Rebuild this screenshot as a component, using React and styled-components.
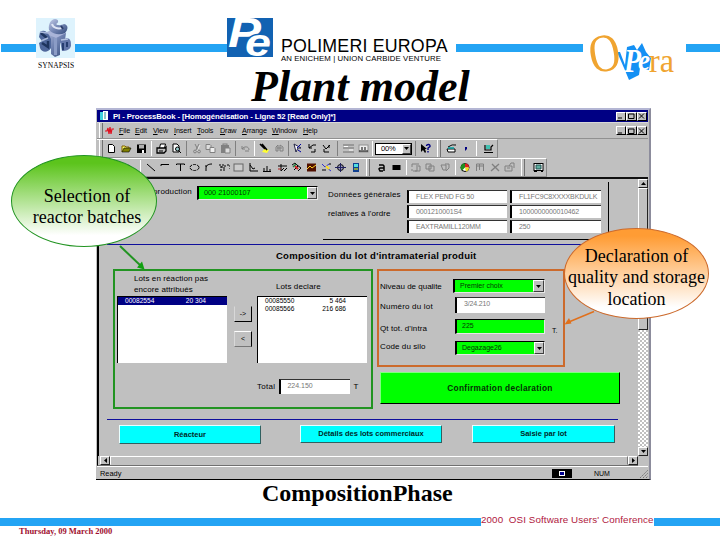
import React from "react";
import styled, { createGlobalStyle } from "styled-components";

const BLUE = "#24a4f4";
const GRAY = "#c0c0c0";
const LIME = "#00ff00";

const toolbarTop = [
  ["new", 14.5], ["open", 15], ["save", 15], ["sep", 5.5], ["print", 15],
  ["preview", 14.5], ["sepDark", 6], ["cut", 14], ["copy", 14], ["paste", 15],
  ["sepDark", 5.5], ["undo", 14], ["sep", 5], ["pen", 14.5], ["binoculars", 15],
  ["sepDark", 4], ["pointer", 14.5], ["rotateL", 14.5], ["rotateR", 14.5],
  ["sepDark", 7], ["rows", 15], ["columns", 14], ["sep", 4], ["zoom", 39],
  ["sepDark", 5], ["help", 15], ["grip", 11], ["build", 14], ["dot", 15],
  ["sep", 6], ["machine", 19],
];

const toolbarBottom = [
  ["blank", 14], ["magnifier", 18], ["sep", 8], ["line", 14.57],
  ["polyline", 14.57], ["text", 14.57], ["ellipse", 14.57], ["arc", 14.57],
  ["value", 14.57], ["button", 14.57], ["trend", 14.57], ["bars", 14.57],
  ["symbol", 14.57], ["multi", 14.57], ["chart", 14.57], ["xy", 14.57],
  ["target", 14.57], ["doc", 14.57], ["grip", 12], ["fontA", 14.5],
  ["fill", 14.5], ["sep", 6], ["group", 14.3], ["front", 14.3],
  ["back", 14.3], ["sep", 6], ["pie", 14.7], ["letterM", 14.7],
  ["cross", 14.7], ["card", 14.7], ["grip", 12], ["screen", 18],
];

const menus = [
  ["File", 16], ["Edit", 18], ["View", 21], ["Insert", 23], ["Tools", 23],
  ["Draw", 22], ["Arrange", 30], ["Window", 31], ["Help", 20],
];

const k = { fill: "none", stroke: "#000", strokeWidth: 1 };
const g = { fill: "none", stroke: "#808080", strokeWidth: 1 };

const shapes = {
  new: <path d="M2.5 1.5h4l2 2v6h-6z" fill="#fff" stroke="#000" />,
  open: (
    <>
      <path d="M1 9V3h3l1 1h3v2" fill="#ffff66" stroke="#806000" />
      <path d="M1 9l2-4h7L8 9z" fill="#808000" stroke="#000" strokeWidth=".6" />
    </>
  ),
  save: (
    <>
      <rect x="1" y="1.5" width="9" height="8.5" fill="#000" />
      <rect x="3" y="2" width="5" height="3.5" fill="#b0b0b0" />
      <rect x="6" y="7" width="2" height="3" fill="#fff" />
    </>
  ),
  print: (
    <>
      <path d="M3.5 5l1-4h5l-1 4" fill="#fff" stroke="#000" />
      <path d="M1 5h8l1-1v4l-2 2H1z" fill={GRAY} stroke="#000" strokeWidth="1.3" />
      <path d="M3 8h4" {...k} />
    </>
  ),
  preview: (
    <>
      <path d="M2 1h4l2 2v6H2z" fill="#fff" stroke="#000" />
      <circle cx="6.5" cy="6" r="2" fill="#9cc" stroke="#000" />
      <path d="M8 8l2 2" {...k} />
    </>
  ),
  cut: (
    <>
      <path d="M4 1l3 6M8 1L5 7" {...g} />
      <circle cx="4" cy="8.5" r="1.4" {...g} />
      <circle cx="8" cy="8.5" r="1.4" {...g} />
      <path d="M9 2L6 8" stroke="#fff" strokeWidth=".6" />
    </>
  ),
  copy: (
    <>
      <path d="M1 1.5h4l1 1v4H1z" fill="#ddd" stroke="#808080" />
      <path d="M5 4.5h4l1 1v4H5z" fill="#eee" stroke="#808080" />
    </>
  ),
  paste: (
    <>
      <rect x="1" y="2" width="8" height="8" fill="#808080" />
      <rect x="3" y="1" width="4" height="2" {...g} />
      <path d="M5 5h5v5H5z" fill="#ddd" stroke="#808080" />
    </>
  ),
  undo: <path d="M2 3v3h3M2 6c2-3 7-3 7 1M5 8h4" {...g} />,
  pen: (
    <>
      <path d="M6 5l4 2-2 3-5-1z" fill="#ffff33" />
      <path d="M1 1l5 5M3 1l5 6" stroke="#000" strokeWidth="1.6" />
    </>
  ),
  binoculars: (
    <>
      <path d="M2 8V4l2-2v6zM6 8V2l3 2v4z" {...g} />
      <path d="M3 5h5" {...g} />
    </>
  ),
  pointer: (
    <>
      <path d="M2 1l2 8 2-4 3 0z" fill="#fff" stroke="#224" />
      <path d="M5 5l4-4M6 7l3 2" stroke="#0000a0" />
    </>
  ),
  rotateL: <path d="M2 1v4h3M2 5l4-3h3M4 9h4V6" {...k} />,
  rotateR: <path d="M2 2l3 4 4-4M3 6v3h5M8 2v3" {...k} />,
  rows: (
    <>
      <path d="M0 2h11M0 5h11M0 9h11" stroke="#707070" />
      <path d="M1 3.5h4M6 7h4" stroke="#fff" />
    </>
  ),
  columns: (
    <>
      <rect x="1" y="2" width="9" height="7" fill="#eee" stroke="#909090" />
      <path d="M1 8h9M4 4v3M7 4v3" {...k} />
    </>
  ),
  help: (
    <>
      <path d="M1 1v8l2-2 2 3 1-1-1-3h2z" fill="#000" />
      <path d="M6.5 3c0-2 4-2 3.500.5L8 5v2M8 8v1.500" stroke="#000080" strokeWidth="1.400" fill="none" />
    </>
  ),
  build: (
    <>
      <path d="M1 6h8v3H2zM2 4l4-2h4" fill="#fff" stroke="#000" />
      <path d="M2 5h6" stroke="#00a0a0" strokeWidth="1.500" />
    </>
  ),
  dot: <path d="M5 4h2v2L5 8z" fill="#000080" />,
  machine: (
    <>
      <path d="M1 9.5h9M2 2v5h6V4l2-2" stroke="#000" fill="none" strokeWidth="1.2" />
      <rect x="3" y="2" width="4" height="4" fill="#40c0b0" />
    </>
  ),
  magnifier: <path d="M2 9l2-4 3-2 2 2v5M5 6l2 3" {...k} />,
  line: <path d="M1 2l8 7" {...k} />,
  polyline: <path d="M1 4V2.500h8" {...k} />,
  text: <path d="M1.500 3V2h8v1M5.500 2v7" {...k} />,
  ellipse: <ellipse cx="5.500" cy="5.500" rx="4.500" ry="3" strokeDasharray="3 1" {...k} />,
  arc: <path d="M2 9V6c0-3 3-4 6-4M1 4h2" {...k} />,
  value: <path d="M0 3h2v4M3 3h3v3H3zM8 3h3v4M1 8h6" strokeDasharray="2 1" {...k} />,
  button: <rect x="1" y="2" width="9" height="7" fill="#ccc" stroke="#666" />,
  trend: <path d="M2 1v8h8M2 3l3 4 2-1" {...k} />,
  bars: <path d="M2 9V6M5 9V4M8 9V7M1 9.500h8" {...k} />,
  symbol: (
    <>
      <path d="M1 4h9M4 2v7l3-3M7 9l3-3" {...k} />
      <path d="M1 7h3" stroke="#b02020" />
    </>
  ),
  multi: (
    <>
      <path d="M1 3l3-2 3 3-4 4M6 3l4 3-3 3" {...k} />
      <path d="M4 4l3 3" stroke="#d02020" strokeWidth="2" />
      <path d="M2 5l3-3" stroke="#208040" strokeWidth="1.500" />
    </>
  ),
  chart: (
    <>
      <rect x="1" y="1.500" width="9" height="8" fill="#501000" />
      <path d="M1 7l3-3 2 2 4-3" stroke="#ffd020" fill="none" />
    </>
  ),
  xy: (
    <>
      <path d="M1 2l3 3 4-3M6 6l4 3" stroke="#3030d0" fill="none" />
      <path d="M5 4l3 3" stroke="#ffe020" strokeWidth="2" />
      <path d="M1 8h4M8 2h2" {...k} />
    </>
  ),
  target: (
    <>
      <circle cx="5.500" cy="5.500" r="3" fill="#a0a0c0" stroke="#000" />
      <path d="M0 5.500h11M5.500 1v9" stroke="#202060" />
    </>
  ),
  doc: (
    <>
      <rect x="3" y="1" width="6" height="9" fill="#104090" />
      <rect x="4" y="2" width="4" height="3" fill="#50e0e0" />
      <path d="M4 7h4" stroke="#ff0" />
    </>
  ),
  fontA: <path d="M3 3h4l1 1v5M8 6H4L3 7l1 2h3" {...k} strokeWidth="1.500" />,
  fill: <rect x="1.500" y="3" width="8" height="5" fill="#000" />,
  group: <path d="M1 5V2h7M2 9h4V5M5 4h4v5H4M1 7v2" {...g} />,
  front: <path d="M1 2h5v5H1zM4 4h5v5H4z" {...g} />,
  back: <path d="M1 3h5v5H3zM5 2h4v4L6 9" {...g} />,
  pie: (
    <>
      <circle cx="5" cy="5.500" r="4" fill="#fff" stroke="#000" />
      <path d="M5 5.500V1.500a4 4 0 0 1 4 4z" fill="#e02020" />
      <path d="M5 5.500L2 8.500A4 4 0 0 1 5 1.500z" fill="#209020" />
      <path d="M5 5.500H9a4 4 0 0 1-3 4z" fill="#f0e020" />
    </>
  ),
  letterM: <path d="M1.500 9V2h3v6M4.500 2l4 0v7M2 4h6" {...g} />,
  cross: <path d="M1 9l8-7M2 2l7 7" {...g} strokeWidth="1.400" />,
  card: <path d="M1 4h7v5H1zM5 4l2-3h3v5M3 6h3" {...g} />,
  screen: (
    <>
      <rect x="1" y="1.500" width="9" height="7" fill="#fff" stroke="#000" />
      <path d="M3 3h5v4H3z" fill="#60b0a0" stroke="#205050" />
      <path d="M1 9.500h3M8 9.500h2" {...k} />
    </>
  ),
};

function Tools({ items, width }) {
  return (
    <ToolRow $w={width}>
      <Grip $w={7} />
      {items.map(([name, w], i) => {
        if (name === "sep" || name === "sepDark") {
          return <Separator key={i} $w={w} $dark={name === "sepDark"} />;
        }
        if (name === "grip") return <Grip key={i} $w={w} />;
        if (name === "zoom") {
          return (
            <ToolCell key={i} $w={w}>
              <ZoomBox>
                <ZoomValue>00%</ZoomValue>
                <DropButton $w={9}>
                  <Triangle />
                </DropButton>
              </ZoomBox>
            </ToolCell>
          );
        }
        return (
          <ToolCell key={i} $w={w}>
            <svg width="11" height="11" viewBox="0 0 11 11">
              {shapes[name]}
            </svg>
          </ToolCell>
        );
      })}
    </ToolRow>
  );
}

function Triangle({ dir = "down" }) {
  const d = {
    down: "M0 1h5L2.5 4z",
    up: "M0 4h5L2.5 1z",
    left: "M4 0v5L1 2.5z",
    right: "M1 0v5l3-2.500z",
  }[dir];
  return (
    <svg width="5" height="5" viewBox="0 0 5 5">
      <path d={d} fill="#000" />
    </svg>
  );
}

function WindowButtons() {
  return (
    <Captions>
      <CaptionButton>
        <svg width="7" height="6"><path d="M1 5h4" stroke="#000" /></svg>
      </CaptionButton>
      <CaptionButton>
        <svg width="7" height="6"><path d="M.5 1h5.500v4.500h-5.500z" {...k} /></svg>
      </CaptionButton>
      <CaptionButton>
        <svg width="7" height="6"><path d="M1 .5l5 5M6 .5l-5 5" {...k} /></svg>
      </CaptionButton>
    </Captions>
  );
}

function SynapsisLogo() {
  return (
    <svg width="39" height="40" viewBox="0 0 39 40">
      <defs>
        <linearGradient id="steel" x1="0" y1="0" x2="1" y2="1">
          <stop offset="0" stopColor="#c4cce8" />
          <stop offset=".5" stopColor="#7486b4" />
          <stop offset="1" stopColor="#344c7c" />
        </linearGradient>
      </defs>
      <rect width="39" height="40" fill="#def3fd" />
      <path d="M8 15l11-4 11 4-1 7-5 3v12l-5 2-4-3V26l-8-6z" fill="url(#steel)" />
      <path d="M8 15l11-3 11 3-10 5z" fill="#a9b4d8" />
      <path d="M18 20l3 0v17l-3 0z" fill="#8b9cc6" />
      <path d="M13 12c-1-6 2-11 6-11 4 0 4 4 1 5 2 2 6 1 8 0 5 1 4 6 1 9-5 2-11 2-16-3z" fill="url(#steel)" />
      <path d="M16 6c1 4 6 5 10 4" fill="none" stroke="#dfe5f5" strokeWidth="2" />
      <path d="M25 8l2 3" stroke="#2c3e6c" strokeWidth="2" />
      <path d="M4 14c4-3 7 0 9 3l2 4v9c-3 5-9 5-11 0l-1-5 3-2-3-4z" fill="#50689c" />
      <path d="M5 15l6 5M6 25l6 4v-6" fill="none" stroke="#1e345e" strokeWidth="2.500" />
      <path d="M4 14l8 1M5 23l7-3" stroke="#a9b9da" strokeWidth="1.500" />
      <path d="M24 23l7-3c4 1 4 4 4 8-1 4-5 5-9 5z" fill="#6478aa" />
      <path d="M27 25v7M31 24v5" stroke="#263e70" strokeWidth="2" />
      <path d="M25 22l7-1" stroke="#b5c2e0" strokeWidth="1.500" />
    </svg>
  );
}

function PeLogo() {
  return (
    <svg width="46" height="39" viewBox="0 0 46 39">
      <rect width="46" height="39" fill="#1262b2" />
      <g fill="#fff" fontFamily="Liberation Sans, sans-serif" fontWeight="bold" fontStyle="italic">
        <text x="1" y="29" fontSize="42" textLength="33" lengthAdjust="spacingAndGlyphs">P</text>
        <text x="18" y="38" fontSize="39" textLength="26" lengthAdjust="spacingAndGlyphs" stroke="#1262b2" strokeWidth="3" paintOrder="stroke">e</text>
      </g>
    </svg>
  );
}

function OperaLogo() {
  return (
    <svg width="92" height="58" viewBox="584 28 92 58">
      <path d="M617 52h3l5 13 2-18 7-2 3 5 5-7 4 9 5 6-2 12-9-2-1 7-10 5-5-12z" fill="#1490f4" />
      <g fontFamily="Liberation Serif, serif">
        <text x="589" y="71" fontSize="54" fill="#f0a430" textLength="31" lengthAdjust="spacingAndGlyphs" transform="rotate(-10 605 54)">O</text>
        <text x="624" y="72" fontSize="34" fontStyle="italic" fontWeight="bold" fill="#fff" textLength="17" lengthAdjust="spacingAndGlyphs">P</text>
        <text x="638" y="70" fontSize="29" fontStyle="italic" fontWeight="bold" fill="#fff" textLength="12" lengthAdjust="spacingAndGlyphs">e</text>
        <text x="649" y="72" fontSize="34" fill="#f0a430" textLength="25" lengthAdjust="spacingAndGlyphs">ra</text>
      </g>
    </svg>
  );
}

function App() {
  return (
    <Slide>
      <GlobalStyle />
      <Header>
        <Bar $w={35} />
        <Synapsis>
          <SynapsisLogo />
          <SynapsisName>SYNAPSIS</SynapsisName>
        </Synapsis>
        <Bar $w={152} />
        <Brand>
          <PeLogo />
          <BrandText>
            <BrandName>POLIMERI EUROPA</BrandName>
            <BrandSub>AN ENICHEM | UNION CARBIDE VENTURE</BrandSub>
          </BrandText>
        </Brand>
        <Bar $w={127} />
        <Opera>
          <OperaLogo />
        </Opera>
        <Bar $w={34} />
      </Header>
      <Title>Plant model</Title>

      <Window>
        <TitleBar>
          <svg width="9" height="10">
            <rect x="0" y="1" width="4" height="8" fill="#40d0e0" />
            <rect x="3" y="0" width="5" height="9" fill="#fff" />
            <path d="M5 1v7" stroke="#208090" />
          </svg>
          <TitleText>PI - ProcessBook - [Homogénéisation - Ligne 52 [Read Only]*]</TitleText>
          <WindowButtons />
        </TitleBar>
        <MenuBar>
          <Grip $w={8} />
          <svg width="14" height="10">
            <path d="M0 5h2l1-3 1 6 1-7 1 7 1-5h2" fill="none" stroke="#e01020" strokeWidth="1.2" />
          </svg>
          {menus.map(([name, w]) => (
            <MenuItem key={name} $w={w}>
              <u>{name[0]}</u>
              {name.slice(1)}
            </MenuItem>
          ))}
          <WindowButtons />
        </MenuBar>
        <Tools items={toolbarTop} width={401} />
        <Tools items={toolbarBottom} width={450} />

        <Work>
          <Canvas>
            <TopForm>
              <ProductionLabel>production</ProductionLabel>
              <Combo $w={121} $h={14}>
                <ComboValue>000 21000107</ComboValue>
                <DropButton $w={10}>
                  <Triangle />
                </DropButton>
              </Combo>
              <OrderPanel>
                <OrderLabels>
                  <Label $ls={0.2}>Données générales</Label>
                  <Label $ls={0.1}>relatives à l'ordre</Label>
                </OrderLabels>
                <OrderFields>
                  <Field>FLEX PEND FG 50</Field>
                  <Field>FL1FC9C8XXXXBKDULK</Field>
                  <Field>0001210001S4</Field>
                  <Field>1000000000010462</Field>
                  <Field>EAXTRAMILL120MM</Field>
                  <Field>250</Field>
                </OrderFields>
              </OrderPanel>
            </TopForm>
            <Rule />
            <SectionTitle>Composition du lot d'intramaterial produit</SectionTitle>
            <Panels>
              <BatchFrame>
                <BatchColumn>
                  <ListLabel $pad={17}>
                    Lots en réaction pas
                    <br />
                    encore attribués
                  </ListLabel>
                  <List>
                    <ListRow $active>
                      <span>00082554</span>
                      <span>20 304</span>
                    </ListRow>
                  </List>
                </BatchColumn>
                <Movers>
                  <MoveButton $dark>-&gt;</MoveButton>
                  <MoveButton>&lt;</MoveButton>
                </Movers>
                <BatchColumn>
                  <ListLabel $pad={19}>Lots declare</ListLabel>
                  <List>
                    <ListRow>
                      <span>00085550</span>
                      <span>5 464</span>
                    </ListRow>
                    <ListRow>
                      <span>00085566</span>
                      <span>216 686</span>
                    </ListRow>
                  </List>
                  <Total>
                    <Label $ls={0.3}>Total</Label>
                    <TotalField>224.150</TotalField>
                    <Label>T</Label>
                  </Total>
                </BatchColumn>
              </BatchFrame>
              <RightColumn>
                <QualityFrame>
                  <Label>Niveau de qualite</Label>
                  <Combo $w={92} $h={14}>
                    <ComboValue $small>Premier choix</ComboValue>
                    <DropButton $w={11}>
                      <Triangle />
                    </DropButton>
                  </Combo>
                  <Label $ls={0.2}>Numéro du lot</Label>
                  <Field $h={16}>3/24.210</Field>
                  <Label $ls={0.1}>Qt tot. d'intra</Label>
                  <Quantity>
                    <Combo $w={90} $h={15}>
                      <ComboValue $small>225</ComboValue>
                    </Combo>
                    <Unit>T.</Unit>
                  </Quantity>
                  <Label $ls={0.1}>Code du silo</Label>
                  <Combo $w={90} $h={14}>
                    <ComboValue $small>Degazage26</ComboValue>
                    <DropButton $w={10}>
                      <Triangle />
                    </DropButton>
                  </Combo>
                </QualityFrame>
                <Confirm>Confirmation declaration</Confirm>
              </RightColumn>
            </Panels>
            <Rule />
            <Actions>
              <Action $w={142} $h={19}>Réacteur</Action>
              <Action $w={142} $h={18}>Détails des lots commerciaux</Action>
              <Action $w={143} $h={18}>Saisie par lot</Action>
            </Actions>
          </Canvas>
          <VScroll>
            <ScrollButton>
              <Triangle dir="up" />
            </ScrollButton>
            <Thumb />
            <Track />
            <ScrollButton>
              <Triangle />
            </ScrollButton>
          </VScroll>
        </Work>
        <HScroll>
          <ScrollButton>
            <Triangle dir="left" />
          </ScrollButton>
          <HThumb />
          <ScrollButton>
            <Triangle dir="right" />
          </ScrollButton>
        </HScroll>
        <Status>
          <span>Ready</span>
          <Indicator>
            <i />
          </Indicator>
          <Num>NUM</Num>
          <svg width="9" height="9">
            <path d="M1 9l8-8M4 9l5-5M7 9l2-2" stroke="#777" strokeDasharray="2 1" />
          </svg>
        </Status>
      </Window>

      <Caption>CompositionPhase</Caption>
      <Footer>
        <FooterBar $w={481} />
        <Conference>2000 &nbsp;OSI Software Users' Conference</Conference>
        <FooterBar $w={66} />
      </Footer>
      <DateText>Thursday, 09 March 2000</DateText>

      <Callout $x={11} $y={155} $w={146} $h={92} $shift={6} $drop={12} $from="#5cc41c" $line="#229422">
        Selection of
        <br />
        reactor batches
      </Callout>
      <Callout $x={564} $y={228} $w={145} $h={91} $shift={0} $drop={9} $from="#ff9c34" $line="#cc6a2c">
        Declaration of
        <br />
        quality and storage
        <br />
        location
      </Callout>
      <Arrows width="720" height="540">
        <path d="M120 246L141 266" stroke="#229422" strokeWidth="2" />
        <path d="M144.500 269.500l-7.500-2 5-6z" fill="#10a010" />
        <path d="M594 311.500L570 321.500" stroke="#e0701c" strokeWidth="1.500" />
        <path d="M564.500 324.500l4.500-6.500 2.500 5.500z" fill="#e0701c" />
      </Arrows>
    </Slide>
  );
}

const GlobalStyle = createGlobalStyle`
  * {
    box-sizing: border-box;
  }
  body {
    margin: 0;
    background: #fff;
  }
  svg {
    display: block;
    flex: none;
  }
`;

const Slide = styled.div`
  position: relative;
  display: flex;
  flex-direction: column;
  width: 720px;
  height: 540px;
  overflow: hidden;
  background: #fff;
  color: #000;
  font-family: "Liberation Sans", Arial, sans-serif;
  white-space: nowrap;
`;
const Header = styled.header`
  display: flex;
  flex: none;
  align-items: flex-start;
  height: 64px;
  padding-left: 1px;
`;
const Bar = styled.div`
  flex: none;
  width: ${(p) => p.$w}px;
  height: 8px;
  margin-top: 44px;
  background: ${BLUE};
`;
const Synapsis = styled.div`
  flex: none;
  width: 39px;
  padding-top: 18px;
`;
const SynapsisName = styled.div`
  padding: 3px 0 0 2px;
  font: 7.5px/10px "Liberation Serif", serif;
  letter-spacing: 0.1px;
`;
const Brand = styled.div`
  display: flex;
  flex: none;
  width: 229px;
  padding-top: 18px;
`;
const BrandText = styled.div`
  padding: 19px 0 0 8px;
`;
const BrandName = styled.div`
  font-size: 17.8px;
  line-height: 18px;
  letter-spacing: 0.2px;
`;
const BrandSub = styled.div`
  font-size: 7.8px;
  line-height: 8px;
  letter-spacing: 0.1px;
`;
const Opera = styled.div`
  flex: none;
  width: 103px;
  padding: 28px 0 0 1px;
`;
const Title = styled.h1`
  flex: none;
  height: 44px;
  margin: 0 0 0 251px;
  font: italic bold 44px/45px "Liberation Serif", "Times New Roman", serif;
`;

const Window = styled.div`
  display: flex;
  flex: none;
  flex-direction: column;
  width: 555px;
  height: 372px;
  margin-left: 96px;
  padding: 0 1px;
  background: ${GRAY};
  border-top: 2px solid #b4b6d4;
  border-right: 2px solid #8c8c9c;
  border-bottom: 1px solid #000;
`;
const TitleBar = styled.div`
  display: flex;
  flex: none;
  align-items: center;
  height: 12px;
  padding-left: 3px;
  background: #000084;
  color: #fff;
`;
const TitleText = styled.div`
  margin-left: 4px;
  font-size: 7.8px;
  font-weight: bold;
  letter-spacing: -0.11px;
`;
const Captions = styled.div`
  display: flex;
  margin-left: auto;
  padding-right: 1px;
`;
const CaptionButton = styled.div`
  display: flex;
  align-items: center;
  justify-content: center;
  width: 10.500px;
  height: 9px;
  background: ${GRAY};
  border: 1px solid;
  border-color: #fff #000 #000 #fff;
`;
const MenuBar = styled.div`
  display: flex;
  flex: none;
  align-items: center;
  height: 17px;
  border-top: 1px solid #d8d8d8;
  border-bottom: 1px solid #909090;
`;
const MenuItem = styled.div`
  width: ${(p) => p.$w}px;
  font-size: 7.2px;
  letter-spacing: -0.1px;
`;
const ToolRow = styled.div`
  display: flex;
  flex: none;
  width: ${(p) => p.$w}px;
  height: 19px;
  border-top: 1px solid #fff;
  border-right: 1px solid #888;
  border-bottom: 1px solid #909090;
`;
const ToolCell = styled.div`
  display: flex;
  flex: none;
  align-items: center;
  justify-content: center;
  width: ${(p) => p.$w}px;
`;
const Separator = styled.div`
  flex: none;
  width: 1px;
  margin: 1px ${(p) => (p.$w - 1) / 2}px;
  background: ${(p) => (p.$dark ? "#808080" : "#fff")};
`;
const Grip = styled.div`
  flex: none;
  align-self: stretch;
  width: 4px;
  margin: 0 ${(p) => (p.$w - 4) / 2}px;
  border-left: 1px solid #fff;
  border-right: 1px solid #707070;
`;
const ZoomBox = styled.div`
  display: flex;
  width: 37px;
  height: 12px;
  background: #fff;
  border: 1px solid #000;
`;
const ZoomValue = styled.div`
  flex: 1;
  padding-left: 5px;
  font-size: 7.5px;
  line-height: 10px;
  letter-spacing: -0.2px;
`;
const DropButton = styled.div`
  display: flex;
  flex: none;
  align-items: center;
  justify-content: center;
  width: ${(p) => p.$w}px;
  background: ${GRAY};
  border: 1px solid;
  border-color: #fff #404040 #404040 #fff;
`;

const Work = styled.div`
  display: flex;
  flex: none;
  width: 551px;
  height: 279px;
  border-top: 2px solid #101010;
  border-left: 2px solid #000;
`;
const Canvas = styled.div`
  flex: none;
  width: 539px;
  font-size: 8px;
`;
const TopForm = styled.div`
  display: flex;
  align-items: flex-start;
  height: 65px;
  padding: 3px 0 0 54px;
`;
const ProductionLabel = styled.div`
  width: 44px;
  margin-top: 5px;
  letter-spacing: 0.15px;
`;
const Combo = styled.div`
  display: flex;
  flex: none;
  align-self: start;
  width: ${(p) => p.$w}px;
  height: ${(p) => p.$h}px;
  background: ${LIME};
  border: 1px solid #222;
  border-color: #000 #e8e8e8 #e8e8e8 #000;
  border-left-width: 2px;

  ${TopForm} > & {
    margin-top: 4px;
  }
`;
const ComboValue = styled.div`
  flex: 1;
  padding-left: 5px;
  font-size: ${(p) => (p.$small ? 7 : 7.3)}px;
  line-height: ${(p) => (p.$small ? 12 : 11)}px;
  color: #043804;
`;
const OrderPanel = styled.div`
  display: flex;
  width: 286px;
  height: 58px;
  margin-left: 5px;
  padding: 8px 0 0 5px;
  border-right: 1px solid #000;
  border-bottom: 1px solid #000;
`;
const OrderLabels = styled.div`
  display: flex;
  flex-direction: column;
  gap: 9px;
  width: 79px;
`;
const Label = styled.div`
  font-size: 8px;
  line-height: 10px;
  letter-spacing: ${(p) => p.$ls || 0}px;
`;
const OrderFields = styled.div`
  display: grid;
  grid-template-columns: 100px 91px;
  grid-auto-rows: 13px;
  gap: 2px 3px;
`;
const Field = styled.div`
  height: ${(p) => (p.$h ? p.$h + "px" : "auto")};
  padding-left: 7px;
  background: #fff;
  border-top: 1px solid #333;
  border-left: 2px solid #000;
  color: #777;
  font-size: 7px;
  line-height: 12px;
  letter-spacing: -0.15px;
`;
const Rule = styled.div`
  width: 511px;
  height: 1px;
  margin-left: 8px;
  background: #10109c;
`;
const SectionTitle = styled.div`
  height: 24px;
  padding: 4px 0 0 177px;
  font-size: 9.5px;
  font-weight: bold;
  line-height: 13px;
  letter-spacing: 0.26px;
`;
const Panels = styled.div`
  display: flex;
  gap: 4px;
  height: 150px;
  padding-left: 14px;
`;
const BatchFrame = styled.div`
  display: flex;
  flex: none;
  width: 260px;
  height: 140px;
  padding-left: 2px;
  border: 2px solid #229422;
`;
const BatchColumn = styled.div`
  width: 110px;
`;
const ListLabel = styled.div`
  display: flow-root;
  height: 25px;
  padding: ${(p) => (p.$pad === 19 ? 10 : 2)}px 0 0 ${(p) => p.$pad}px;
  font-size: 8px;
  line-height: 11px;
  letter-spacing: 0.1px;
`;
const List = styled.div`
  height: 67px;
  background: #fff;
  border-top: 1px solid #000;
  border-left: 1px solid #000;
`;
const ListRow = styled.div`
  display: flex;
  justify-content: space-between;
  height: 8px;
  padding: 0 21px 0 7px;
  background: ${(p) => (p.$active ? "#000084" : "#fff")};
  color: ${(p) => (p.$active ? "#fff" : "#000")};
  font-size: 6.600px;
  line-height: 8px;
`;
const Movers = styled.div`
  display: flex;
  flex-direction: column;
  gap: 9px;
  width: 30px;
  padding: 35px 5px 0 7px;
`;
const MoveButton = styled.div`
  height: 16px;
  border: 1px solid;
  border-color: ${(p) => (p.$dark ? GRAY : "#fff")} #000 ${(p) => (p.$dark ? "#000" : "#777")} #d8d8d8;
  font-size: 7px;
  line-height: 14px;
  text-align: center;
`;
const Total = styled.div`
  display: flex;
  align-items: center;
  gap: 3px;
  margin-top: 16px;
`;
const TotalField = styled(Field)`
  width: 71px;
  height: 15px;
  margin-left: 1px;
  padding-left: 6px;
  letter-spacing: 0;
`;
const RightColumn = styled.div`
  width: 244px;
`;
const QualityFrame = styled.div`
  display: grid;
  grid-template-columns: 73px 92px;
  grid-template-rows: 18px 22px 22px 14px;
  align-items: center;
  width: 188px;
  height: 98px;
  padding: 8px 0 0 1px;
  border: 2px solid #cc6a2c;

  > ${Combo}, > ${Field} {
    align-self: start;
    justify-self: end;
  }
  > ${Label} {
    padding-bottom: 3px;
  }
  > ${Field} {
    width: 90px;
    font-size: 7px;
  }
`;
const Quantity = styled.div`
  display: flex;
  align-self: start;
  margin-left: 2px;
`;
const Unit = styled.div`
  margin: 8px 0 0 7px;
  font-size: 7px;
  line-height: 8px;
`;
const Confirm = styled.div`
  width: 240px;
  height: 32px;
  margin: 5px 0 0 3px;
  background: ${LIME};
  border: 1px solid;
  border-color: #80ff80 #000 #000 #80ff80;
  color: #053005;
  font-size: 8.300px;
  font-weight: bold;
  line-height: 30px;
  letter-spacing: 0.3px;
  text-align: center;
`;
const Actions = styled.div`
  display: flex;
  align-items: flex-start;
  padding: 5px 0 0 20px;

  > :nth-child(2) {
    margin: 0 30px 0 39px;
  }
`;
const Action = styled.div`
  flex: none;
  width: ${(p) => p.$w}px;
  height: ${(p) => p.$h}px;
  background: #00ffff;
  border: 1px solid;
  border-color: #e8ffff #306060 #306060 #e8ffff;
  color: #002828;
  font-size: 7.500px;
  font-weight: bold;
  line-height: ${(p) => p.$h - 2}px;
  text-align: center;
`;

const VScroll = styled.div`
  display: flex;
  flex: none;
  flex-direction: column;
  width: 10px;
`;
const ScrollButton = styled.div`
  display: flex;
  flex: none;
  align-items: center;
  justify-content: center;
  width: 10px;
  height: 9px;
  background: ${GRAY};
  border: 1px solid;
  border-color: #fff #222 #222 #fff;
`;
const Thumb = styled.div`
  height: 142px;
  background: ${GRAY};
  border: 1px solid;
  border-color: #fff #222 #222 #fff;
`;
const Track = styled.div`
  flex: 1;
  background: repeating-conic-gradient(#fff 0 25%, ${GRAY} 0 50%) 0 0 / 4px 4px;
`;
const HScroll = styled.div`
  display: flex;
  flex: none;
  width: 541px;
  height: 10px;
  padding-left: 2px;
  border-left: 1px solid #000;
  border-bottom: 1px solid #707070;
`;
const HThumb = styled.div`
  flex: 1;
  border: 1px solid;
  border-color: #fff #777 #c0c0c0 #fff;
`;
const Status = styled.div`
  display: flex;
  flex: 1;
  align-items: center;
  padding-left: 3px;
  border-top: 1px solid #fff;
  font-size: 7.400px;

  > span {
    flex: 1;
  }
`;
const Indicator = styled.div`
  display: flex;
  align-items: center;
  justify-content: center;
  width: 20px;
  height: 9px;
  background: #000;

  i {
    width: 6px;
    height: 5px;
    background: #000090;
    border: 1px solid #fff;
  }
`;
const Num = styled.div`
  width: 67px;
  padding-left: 22px;
  font-size: 7px;
`;

const Caption = styled.div`
  flex: none;
  height: 38px;
  padding: 0 0 0 262px;
  font: bold 24px/26px "Liberation Serif", "Times New Roman", serif;
`;
const Footer = styled.div`
  display: flex;
  flex: none;
  height: 8px;
`;
const FooterBar = styled.div`
  flex: none;
  width: ${(p) => p.$w}px;
  height: 8px;
  background: ${BLUE};
`;
const Conference = styled.div`
  flex: none;
  width: 173px;
  color: #b01840;
  font-size: 9.800px;
  line-height: 4px;
  letter-spacing: 0.1px;
`;
const DateText = styled.div`
  padding: 0 0 0 19px;
  color: #a01030;
  font: bold 8.500px/11px "Liberation Serif", "Times New Roman", serif;
`;

const Callout = styled.div`
  position: absolute;
  left: ${(p) => p.$x}px;
  top: ${(p) => p.$y}px;
  display: flex;
  align-items: center;
  justify-content: center;
  width: ${(p) => p.$w}px;
  height: ${(p) => p.$h}px;
  padding-top: ${(p) => p.$drop}px;
  padding-left: ${(p) => p.$shift}px;
  background: linear-gradient(${(p) => p.$from} 8%, #fff 88%);
  border: 1.500px solid ${(p) => p.$line};
  border-radius: 50%;
  font: 18px/21.500px "Liberation Serif", "Times New Roman", serif;
  text-align: center;
`;
const Arrows = styled.svg`
  position: absolute;
  left: 0;
  top: 0;
`;

export default App;
